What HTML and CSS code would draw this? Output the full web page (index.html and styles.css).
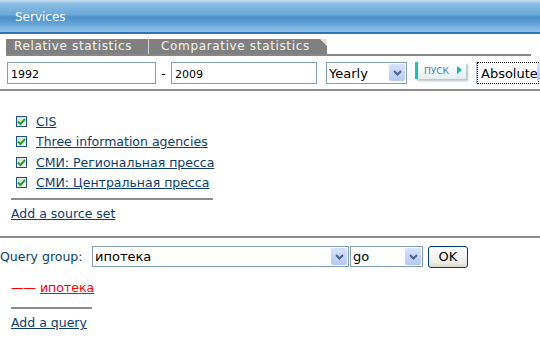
FILE: index.html
```html
<!DOCTYPE html>
<html lang="en">
<head>
  <meta charset="UTF-8">
  <title>Services</title>
  <link rel="stylesheet" href="styles.css">
</head>
<body>
  <div class="header">Services</div>

  <div class="tabs">
    <span class="tab">Relative statistics</span><span class="tab tab-last">Comparative statistics</span>
  </div>

  <div class="period">
    <input class="field" type="text" value="1992">
    <span class="dash">-</span>
    <input class="field" type="text" value="2009">
    <div class="select sel-yearly">
      <select><option>Yearly</option></select>
      <span class="arrow"><svg width="9" height="6" viewBox="0 0 9 6"><path d="M1 1l3.5 3.5L8 1" fill="none" stroke="#4d6185" stroke-width="2"/></svg></span>
    </div>
    <button class="go-btn">ПУСК<span class="tri"></span></button>
    <div class="select sel-abs">
      <select><option>Absolute</option></select>
      <span class="arrow"></span>
    </div>
  </div>

  <div class="sources">
    <ul class="source-list">
      <li><span class="check"><svg width="9" height="9" viewBox="0 0 9 9"><path d="M1 4.5l2.5 2.5L8 2" fill="none" stroke="#21a121" stroke-width="2"/></svg></span><a href="#">CIS</a></li>
      <li><span class="check"><svg width="9" height="9" viewBox="0 0 9 9"><path d="M1 4.5l2.5 2.5L8 2" fill="none" stroke="#21a121" stroke-width="2"/></svg></span><a href="#">Three information agencies</a></li>
      <li><span class="check"><svg width="9" height="9" viewBox="0 0 9 9"><path d="M1 4.5l2.5 2.5L8 2" fill="none" stroke="#21a121" stroke-width="2"/></svg></span><a href="#">СМИ: Региональная пресса</a></li>
      <li><span class="check"><svg width="9" height="9" viewBox="0 0 9 9"><path d="M1 4.5l2.5 2.5L8 2" fill="none" stroke="#21a121" stroke-width="2"/></svg></span><a href="#">СМИ: Центральная пресса</a></li>
    </ul>
    <div class="add add-source"><a href="#">Add a source set</a></div>
  </div>

  <div class="queries">
    <div class="query-row">
      <span class="label">Query group:</span>
      <div class="select sel-query">
        <select><option>ипотека</option></select>
        <span class="arrow"><svg width="9" height="6" viewBox="0 0 9 6"><path d="M1 1l3.5 3.5L8 1" fill="none" stroke="#4d6185" stroke-width="2"/></svg></span>
      </div>
      <div class="select sel-go">
        <select><option>go</option></select>
        <span class="arrow"><svg width="9" height="6" viewBox="0 0 9 6"><path d="M1 1l3.5 3.5L8 1" fill="none" stroke="#4d6185" stroke-width="2"/></svg></span>
      </div>
      <button class="ok">OK</button>
    </div>
    <div class="query-item"><span class="dashes">——</span> <a href="#">ипотека</a></div>
    <div class="add add-query"><a href="#">Add a query</a></div>
  </div>
</body>
</html>
```

FILE: styles.css
```css
* {
  padding: 0;
  margin: 0;
  box-sizing: border-box;
}
body {
  width: 540px;
  height: 360px;
  overflow: hidden;
  background: #fff;
  font-family: "DejaVu Sans", Verdana, sans-serif;
  font-size: 12.5px;
  color: #0b3d6e;
  white-space: nowrap;
}
a {
  color: #0b3d6e;
}

.header {
  height: 34px;
  padding: 10px 0 0 15px;
  color: #fff;
  font-size: 12px;
  background: linear-gradient(#c3def2 0, #8bbde3 4px, #6aa8d8 15px, #4a8fca 17px, #5c9dd2 22px, #8fc1e5 31px);
  border-bottom: 2px solid #2f74b8;
}

.tabs {
  display: flex;
  width: 525px;
  margin: 5px 0 0 6px;
  border-bottom: 2px solid #878787;
}
.tab {
  height: 15px;
  padding: 0 16px 0 8px;
  background: #808080;
  color: #f4f4f4;
  font-size: 12px;
  line-height: 15px;
  letter-spacing: 0.65px;
}
.tab + .tab {
  border-left: 1px solid #d4d4d4;
  padding: 0 17px 0 12px;
}
.tab-last {
  position: relative;
}
.tab-last::after {
  content: "";
  position: absolute;
  top: 0;
  right: 0;
  border-style: solid;
  border-width: 0 7px 7px 0;
  border-color: transparent #e6e4dc transparent transparent;
}

.period {
  display: flex;
  align-items: flex-start;
  height: 35px;
  padding: 6px 0 0 7px;
  border-bottom: 2px solid #8d8d8d;
}
.field {
  width: 149px;
  height: 22px;
  border: 1px solid #7f9db9;
  padding: 2px 3px 0;
  font-family: "DejaVu Sans", sans-serif;
  font-size: 11px;
  color: #000;
}
.dash {
  width: 15px;
  padding-top: 4px;
  text-align: center;
  color: #000;
}
.period .field + .dash + .field {
  width: 146px;
}

.select {
  position: relative;
  height: 21px;
  border: 1px solid #7f9db9;
  background: #fff;
}
.select select {
  appearance: none;
  -webkit-appearance: none;
  width: 100%;
  height: 100%;
  border: 0;
  outline: 0;
  background: transparent;
  padding-left: 2px;
  font-family: "DejaVu Sans", sans-serif;
  font-size: 13px;
  color: #000;
}
.select .arrow {
  position: absolute;
  top: 1px;
  right: 1px;
  width: 16px;
  height: 17px;
  display: flex;
  align-items: center;
  justify-content: center;
  background: linear-gradient(#d7e3fd, #b4c8f6);
  border-radius: 2px;
}
.sel-yearly {
  width: 81px;
  margin-left: 9px;
  height: 22px;
}

.go-btn {
  position: relative;
  width: 51px;
  height: 17px;
  margin-left: 8px;
  border: 0;
  border-left: 3px solid #20c0b0;
  background: linear-gradient(#ffffff, #e5eef2);
  box-shadow: 2px 2px 2px #b9c2c6;
  color: #3d86b8;
  font-family: "DejaVu Sans", sans-serif;
  font-size: 9px;
  text-align: left;
  padding-left: 6px;
}
.go-btn .tri {
  position: absolute;
  right: 4px;
  top: 4px;
  border-style: solid;
  border-width: 4px 0 4px 5px;
  border-color: transparent transparent transparent #1fb3a6;
}

.sel-abs {
  flex: 1;
  margin-left: 10px;
  height: 22px;
  border: 0;
  border-left: 1px solid #a8bcd0;
}
.sel-abs select {
  border: 1px dotted #000;
  padding-left: 3px;
  font-size: 13px;
  width: 62px;
}
.sel-abs .arrow {
  width: 3px;
  right: 0;
  border-radius: 0;
}

.sources {
  padding: 20px 0 0 11px;
  height: 147px;
  border-bottom: 2px solid #8d8d8d;
}
.source-list {
  list-style: none;
  width: 202px;
  padding: 0 0 5px 5px;
  border-bottom: 2px solid #8d8d8d;
}
.source-list li {
  display: flex;
  align-items: center;
  height: 20.5px;
}
.check {
  display: flex;
  align-items: center;
  justify-content: center;
  width: 11px;
  height: 11px;
  margin-right: 9px;
  border: 1px solid #1c5180;
  background: linear-gradient(135deg, #dcdcd4, #fafaf8);
}
.add {
  padding-top: 6px;
}

.queries {
  padding-top: 7px;
}
.query-row {
  display: flex;
  align-items: center;
  height: 23px;
}
.label {
  width: 92px;
}
.sel-query {
  width: 257px;
}
.sel-go {
  width: 73px;
  margin-left: 1px;
}
.ok {
  width: 40px;
  height: 22px;
  margin-left: 5px;
  border: 1px solid #003c74;
  border-radius: 3px;
  background: linear-gradient(#ffffff, #ecebe4 80%, #d8d6cb);
  font-family: "DejaVu Sans", sans-serif;
  font-size: 13px;
  color: #000;
}
.query-item {
  margin: 12px 0 0 11px;
  width: 81px;
  padding-bottom: 12px;
  border-bottom: 2px solid #8d8d8d;
  color: #f00;
}
.query-item a {
  color: #f00;
}
.add-query {
  margin-left: 11px;
  padding-top: 6px;
}
```
